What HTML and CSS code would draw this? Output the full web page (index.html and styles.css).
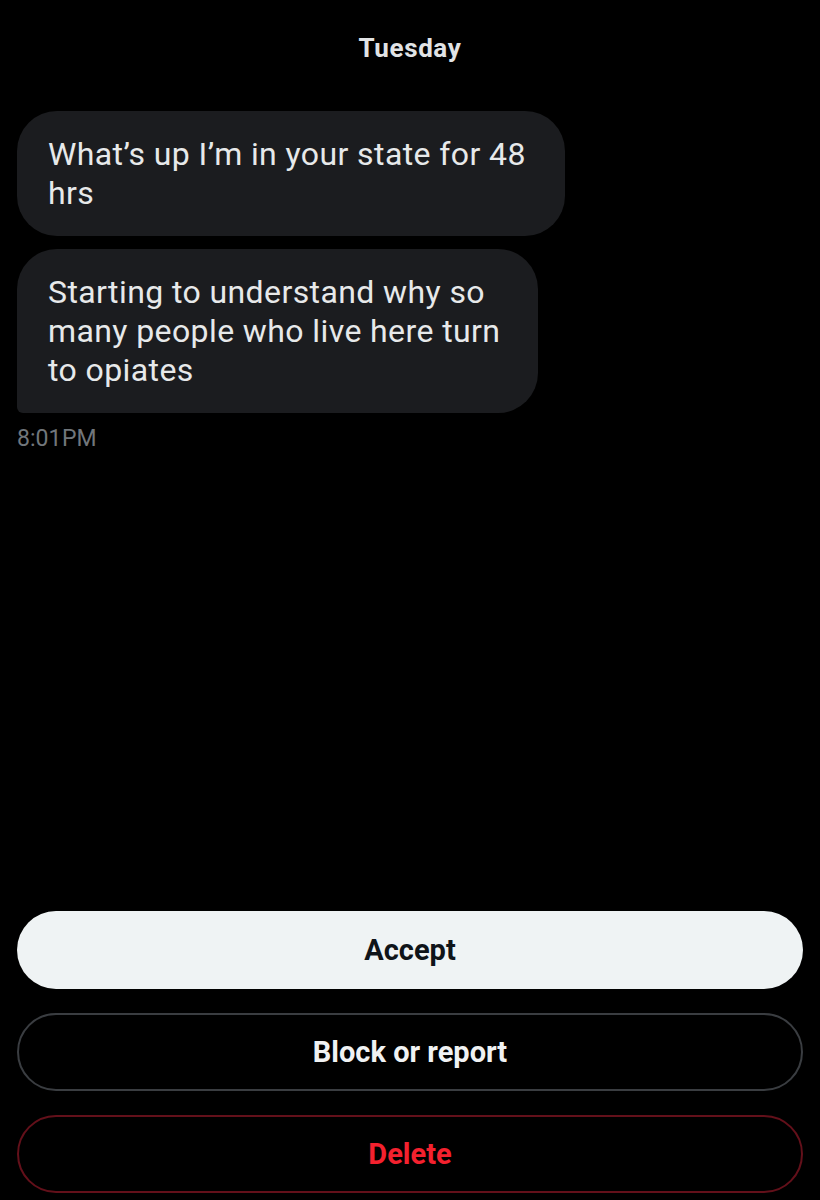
FILE: index.html
```html
<!DOCTYPE html>
<html>
<head>
<meta charset="utf-8">
<link rel="stylesheet" href="styles.css">
</head>
<body>
<div class="screen">
  <div class="day">Tuesday</div>
  <div class="thread">
    <div class="bubble bubble-first">What’s up I’m in your state for 48 hrs</div>
    <div class="bubble bubble-last">Starting to understand why so many people who live here turn to opiates</div>
    <div class="time">8:01 PM</div>
  </div>
  <div class="actions">
    <button class="btn btn-accept">Accept</button>
    <button class="btn btn-block">Block or report</button>
    <button class="btn btn-delete">Delete</button>
  </div>
</div>
</body>
</html>
```
FILE: styles.css
```css
html, body {
  margin: 0;
  padding: 0;
  background: #000;
}
.screen {
  height: 1200px;
  box-sizing: border-box;
  padding: 0 17px 7px 17px;
  display: flex;
  flex-direction: column;
  font-family: Roboto, "Noto Sans", sans-serif;
  color: #e7e9ea;
}
.day {
  text-align: center;
  font-weight: 700;
  font-size: 26px;
  line-height: 32px;
  letter-spacing: 0.6px;
  padding-top: 32px;
  color: #e1e3e5;
}
.thread {
  display: flex;
  flex-direction: column;
  align-items: flex-start;
  gap: 13px;
  margin-top: 47px;
}
.bubble {
  box-sizing: border-box;
  background: #1b1c1f;
  border-radius: 40px;
  padding: 24px 34px 23px 31px;
  font-size: 32px;
  letter-spacing: 0.4px;
  line-height: 39px;
  color: #e7e9ea;
}
.bubble-first {
  width: 548px;
}
.bubble-last {
  width: 521px;
  border-bottom-left-radius: 6px;
}
.time {
  margin-top: -1px;
  font-size: 23px;
  line-height: 28px;
  color: #71767b;
  word-spacing: -5px;
}
.actions {
  margin-top: auto;
  display: flex;
  flex-direction: column;
  gap: 24px;
}
.btn {
  height: 78px;
  border-radius: 39px;
  font-family: Roboto, "Noto Sans", sans-serif;
  font-weight: 700;
  font-size: 29px;
  background: #000;
  box-sizing: border-box;
}
.btn-accept {
  background: #eff3f4;
  color: #0f1419;
  border: none;
}
.btn-block {
  border: 2px solid #3a3d41;
  color: #f0f2f3;
}
.btn-delete {
  border: 2px solid #63101a;
  color: #f4212e;
}
```
